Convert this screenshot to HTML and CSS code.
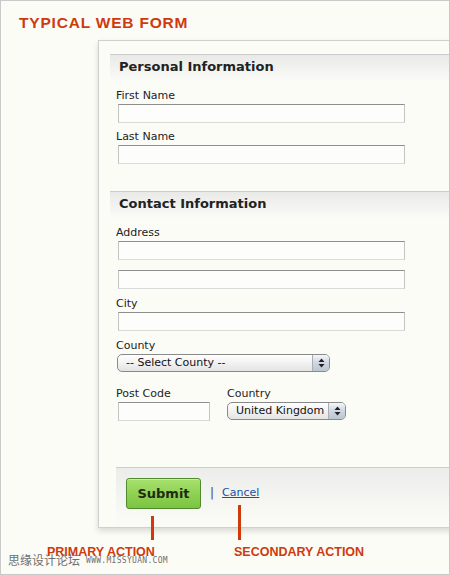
FILE: index.html
```html
<!DOCTYPE html>
<html>
<head>
<meta charset="utf-8">
<link rel="stylesheet" href="styles.css">
</head>
<body>
<div class="frame">
  <h1 class="title">TYPICAL WEB FORM</h1>
  <div class="card">
    <div class="section">
      <h2 class="section-head">Personal Information</h2>
      <div class="fields">
        <label class="label">First Name</label>
        <div class="input wide"></div>
        <label class="label">Last Name</label>
        <div class="input wide"></div>
      </div>
    </div>
    <div class="section second">
      <h2 class="section-head">Contact Information</h2>
      <div class="fields">
        <label class="label">Address</label>
        <div class="input wide"></div>
        <div class="input wide extra"></div>
        <label class="label">City</label>
        <div class="input wide city"></div>
        <label class="label">County</label>
        <div class="select county">
          <span class="select-text">-- Select County --</span>
          <span class="select-arrows"><svg width="7" height="10" viewBox="0 0 7 10"><path d="M3.5 0.5 L6.5 4 L0.5 4 Z M3.5 9.5 L6.5 6 L0.5 6 Z" fill="#222"/></svg></span>
        </div>
        <div class="row">
          <div class="col">
            <label class="label">Post Code</label>
            <div class="input short"></div>
          </div>
          <div class="col country-col">
            <label class="label">Country</label>
            <div class="select country">
              <span class="select-text">United Kingdom</span>
              <span class="select-arrows"><svg width="7" height="10" viewBox="0 0 7 10"><path d="M3.5 0.5 L6.5 4 L0.5 4 Z M3.5 9.5 L6.5 6 L0.5 6 Z" fill="#222"/></svg></span>
            </div>
          </div>
        </div>
      </div>
    </div>
    <div class="actions">
      <button class="submit">Submit</button>
      <span class="sep">|</span>
      <a class="cancel" href="#">Cancel</a>
    </div>
  </div>
  <div class="pointer p1"></div>
  <div class="pointer p2"></div>
  <div class="note n1">PRIMARY ACTION</div>
  <div class="note n2">SECONDARY ACTION</div>
  <div class="watermark"><span class="wm-cn">思缘设计论坛</span><span class="wm-url">WWW.MISSYUAN.COM</span></div>
</div>
</body>
</html>
```

FILE: styles.css
```css
* { box-sizing: border-box; }
html, body { margin: 0; padding: 0; background: #fcfcf7; }
.frame {
  position: relative;
  width: 450px;
  height: 575px;
  border: 1px solid #c9c9c9;
  background: #fcfcf7;
  overflow: hidden;
  font-family: "DejaVu Sans", Verdana, sans-serif;
}
.title {
  margin: 14px 0 0 18px;
  font-family: "Liberation Sans", Arial, sans-serif;
  font-weight: bold;
  font-size: 15.5px;
  line-height: 16px;
  color: #cf3a0c;
  letter-spacing: 0.8px;
}
.card {
  margin: 9px 0 0 97px;
  width: 420px;
  height: 488px;
  border: 1px solid #cfcfcf;
  border-right: none;
  background: #fcfcf7;
  padding: 13px 0 0 11px;
  box-shadow: 0 3px 6px rgba(0,0,0,0.14);
  display: flex;
  flex-direction: column;
}
.section-head {
  margin: 0;
  height: 28px;
  border-top: 1px solid #cdcdcd;
  background: linear-gradient(#e9e9e7, #f4f4f1 60%, #fcfcf7);
  font-size: 13px;
  font-weight: bold;
  color: #222;
  padding: 4px 0 0 9px;
  line-height: 16px;
}
.fields {
  padding: 6px 0 0 6px;
  display: flex;
  flex-direction: column;
  align-items: flex-start;
}
.label {
  display: block;
  font-size: 11px;
  line-height: 15px;
  color: #222;
  margin-bottom: 1px;
}
.input {
  height: 19px;
  margin-left: 2px;
  margin-bottom: 6px;
  border: 1px solid #c4c4c4;
  border-top-color: #8f8f8f;
  border-bottom-color: #dadada;
  background: #fdfdfb;
}
.input.wide { width: 287px; }
.input.extra { margin-top: 4px; margin-bottom: 7px; }
.input.city { margin-bottom: 7px; }
.input.short { width: 92px; }
.section.second { margin-top: 21px; }
.select {
  position: relative;
  height: 18px;
  margin-left: 1px;
  border: 1px solid #8a8a8a;
  border-radius: 5px;
  background: linear-gradient(#ffffff, #f2f2f2 50%, #e3e3e3);
  display: flex;
  align-items: center;
  font-size: 11px;
  color: #111;
  overflow: hidden;
}
.select.county { width: 213px; margin-bottom: 14px; }
.select.country { width: 119px; }
.select-text { flex: 1; padding-left: 8px; line-height: 16px; }
.select-arrows {
  width: 17px;
  height: 100%;
  border-left: 1px solid #a9aeb6;
  background: linear-gradient(#f4f6f9, #cfd6e0 50%, #bcc5d2);
  display: flex;
  align-items: center;
  justify-content: center;
}
.row { display: flex; }
.country-col { margin-left: 17px; }
.country-col .select { margin-left: 0; }
.actions {
  margin: 40px 0 0 6px;
  height: 60px;
  border-top: 1px solid #cdcdcd;
  background: linear-gradient(#ececea, #f4f4f1 50%, #fcfcf7);
  display: flex;
  align-items: flex-start;
  padding: 10px 0 0 10px;
}
.submit {
  width: 75px;
  height: 31px;
  border: 1px solid #4f8a2c;
  border-radius: 3px;
  background: linear-gradient(#a8e16e, #8fd254 50%, #7cc442);
  font-family: "DejaVu Sans", Verdana, sans-serif;
  font-weight: bold;
  font-size: 13px;
  color: #1f2a14;
  padding: 0;
  box-shadow: inset 0 1px 0 rgba(255,255,255,0.4);
}
.sep {
  margin: 8px 0 0 9px;
  font-size: 12px;
  color: #4a4a4a;
}
.cancel {
  margin: 8px 0 0 8px;
  font-size: 11px;
  color: #1b4fa3;
  text-decoration: underline;
}
.pointer {
  position: absolute;
  width: 3px;
  background: #cf3a0c;
}
.p1 { left: 150px; top: 515px; height: 24px; }
.p2 { left: 237px; top: 504px; height: 35px; }
.note {
  position: absolute;
  top: 544px;
  font-family: "Liberation Sans", Arial, sans-serif;
  font-weight: bold;
  font-size: 12.5px;
  line-height: 14px;
  color: #cf3a0c;
}
.n1 { left: 46px; }
.n2 { left: 233px; }
.watermark {
  position: absolute;
  left: 7px;
  top: 551px;
  display: flex;
  align-items: center;
  color: #6f6f6f;
}
.wm-cn {
  font-family: "Noto Sans CJK SC", sans-serif;
  font-size: 12px;
  line-height: 16px;
}
.wm-url {
  margin-left: 6px;
  font-family: "DejaVu Sans Mono", monospace;
  font-size: 8px;
  letter-spacing: 0.3px;
}
```
